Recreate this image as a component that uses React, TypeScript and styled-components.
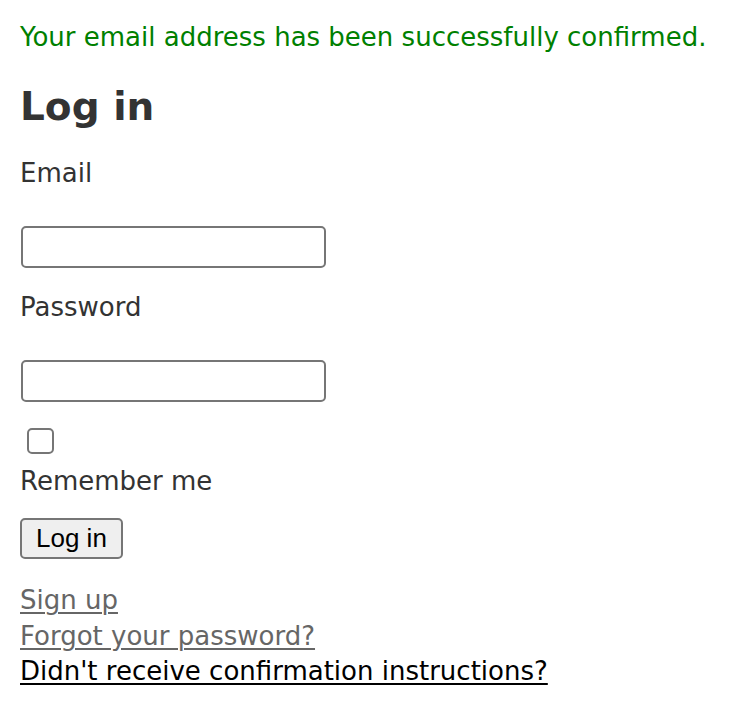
import styled, { createGlobalStyle } from 'styled-components';

const GlobalStyle = createGlobalStyle`
  html, body {
    margin: 0;
    padding: 0;
    background: #fff;
  }
  body {
    font-family: "DejaVu Sans", Verdana, sans-serif;
    color: #333;
  }
`;

const Page = styled.div`
  display: flex;
  flex-direction: column;
  align-items: flex-start;
  padding: 19px 20px 0;
`;
const Notice = styled.p`
  margin: 0;
  color: #008000;
  font-size: 26px;
  line-height: 36px;
`;
const Title = styled.h2`
  margin: 29px 0 0;
  font-size: 39px;
  line-height: 46px;
  font-weight: bold;
  color: #333;
`;
const Form = styled.form`
  display: flex;
  flex-direction: column;
  align-items: flex-start;
`;
const Label = styled.label<{ $top: number }>`
  display: block;
  margin-top: ${(p) => p.$top}px;
  font-size: 26px;
  line-height: 36px;
  color: #333;
`;
const TextInput = styled.input`
  box-sizing: border-box;
  display: block;
  margin: 35px 0 0 1px;
  width: 305px;
  height: 42px;
  padding: 2px 4px;
  border: 2px solid #767676;
  border-radius: 5px;
  background: #fff;
  font-size: 26px;
  outline: none;
`;
const Check = styled.input`
  appearance: none;
  box-sizing: border-box;
  display: block;
  margin: 26px 0 0 7px;
  width: 27px;
  height: 26px;
  border: 2px solid #767676;
  border-radius: 5px;
  background: #fff;
`;
const Submit = styled.button`
  box-sizing: border-box;
  margin-top: 19px;
  height: 41px;
  padding: 0 14px;
  border: 2px solid #767676;
  border-radius: 5px;
  background: #efefef;
  color: #000;
  font-family: "Liberation Sans", Arial, sans-serif;
  font-size: 26px;
`;
const Links = styled.div`
  display: flex;
  flex-direction: column;
  align-items: flex-start;
  margin-top: 24px;
`;
const NavLink = styled.a<{ $visited?: boolean }>`
  font-size: 26px;
  line-height: 35.5px;
  color: ${(p) => (p.$visited ? '#666' : '#000')};
  text-decoration: underline;
  text-decoration-thickness: 2px;
  text-underline-offset: 3px;
`;

export default function App() {
  return (
    <>
      <GlobalStyle />
      <Page>
        <Notice>Your email address has been successfully confirmed.</Notice>
        <Title>Log in</Title>
        <Form onSubmit={(e) => e.preventDefault()}>
          <Label $top={25} htmlFor="user_email">Email</Label>
          <TextInput id="user_email" type="email" />
          <Label $top={21} htmlFor="user_password">Password</Label>
          <TextInput id="user_password" type="password" />
          <Check id="user_remember_me" type="checkbox" />
          <Label $top={9} htmlFor="user_remember_me">Remember me</Label>
          <Submit type="submit">Log in</Submit>
        </Form>
        <Links>
          <NavLink $visited href="#">Sign up</NavLink>
          <NavLink $visited href="#">Forgot your password?</NavLink>
          <NavLink href="#">Didn't receive confirmation instructions?</NavLink>
        </Links>
      </Page>
    </>
  );
}
